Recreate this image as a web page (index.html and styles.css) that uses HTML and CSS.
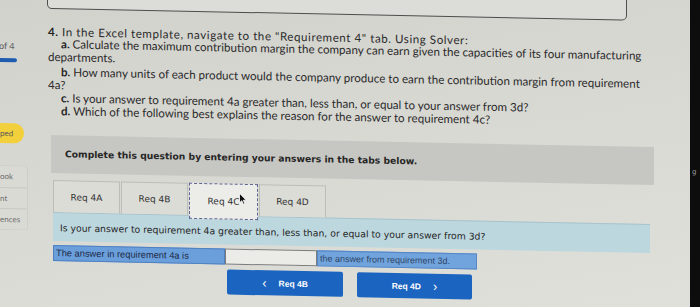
FILE: index.html
```html
<!DOCTYPE html>
<html>
<head>
<meta charset="utf-8">
<link rel="stylesheet" href="styles.css">
</head>
<body>
<div class="screen">
  <div class="page">
    <aside class="sidebar">
      <div class="count">of 4</div>
      <div class="progress"></div>
      <div class="status">ped</div>
      <ul class="tools">
        <li>ook</li>
        <li>nt</li>
        <li>ences</li>
      </ul>
    </aside>
    <main class="main">
      <div class="topbox"></div>
      <div class="question">
        <p class="q-head"><b>4.</b> In the Excel template, navigate to the "Requirement 4" tab. Using Solver:</p>
        <p class="q-item"><b>a.</b> Calculate the maximum contribution margin the company can earn given the capacities of its four manufacturing<br>departments.</p>
        <p class="q-item b"><b>b.</b> How many units of each product would the company produce to earn the contribution margin from requirement<br>4a?</p>
        <p class="q-item c"><b>c.</b> Is your answer to requirement 4a greater than, less than, or equal to your answer from 3d?</p>
        <p class="q-item"><b>d.</b> Which of the following best explains the reason for the answer to requirement 4c?</p>
      </div>
      <div class="instructions">Complete this question by entering your answers in the tabs below.</div>
      <div class="tabs">
        <div class="tab">Req 4A</div>
        <div class="tab">Req 4B</div>
        <div class="tab active">Req 4C
          <svg class="cursor" width="8" height="12" viewBox="0 0 8 12"><path d="M0.5 0.5 L0.5 10 L2.8 7.8 L4.4 11.3 L5.8 10.7 L4.3 7.3 L7.3 7.3 Z" fill="#111" stroke="#fff" stroke-width="0.8"/></svg>
        </div>
        <div class="tab">Req 4D</div>
      </div>
      <div class="prompt">Is your answer to requirement 4a greater than, less than, or equal to your answer from 3d?</div>
      <div class="answer-row">
        <div class="cell label">The answer in requirement 4a is</div>
        <div class="cell input"></div>
        <div class="cell label2">the answer from requirement 3d.</div>
      </div>
      <div class="nav">
        <div class="btn"><span class="chev">&lsaquo;</span><span>Req 4B</span></div>
        <div class="btn next"><span>Req 4D</span><span class="chev">&rsaquo;</span></div>
      </div>
    </main>
  </div>
  <div class="bezel"><span class="mark">g</span></div>
</div>
</body>
</html>
```
FILE: styles.css
```css
* { box-sizing: border-box; }
html, body { margin: 0; padding: 0; }
body {
  width: 700px;
  height: 307px;
  overflow: hidden;
  background: linear-gradient(170deg, #d2d2cd 0%, #d9d9d4 50%, #e0e0db 100%);
  font-family: Lato, "Open Sans", sans-serif;
  color: #2b2b2b;
}
.screen { display: flex; height: 307px; }
.page {
  flex: 1;
  display: flex;
  transform: skewY(1.15deg);
  transform-origin: 50px 0;
}
.sidebar { width: 30px; flex: none; }
.count {
  margin-top: 41px;
  font-size: 9px;
  line-height: 11px;
  color: #5a5a5a;
  margin-left: -1px;
}
.progress {
  margin-top: 7px;
  width: 17px;
  height: 4px;
  background: #1e5cb0;
  border-radius: 0 2px 2px 0;
}
.status {
  margin-top: 61px;
  width: 24px;
  height: 20px;
  line-height: 20px;
  background: #f2d03c;
  border-radius: 0 10px 10px 0;
  font-size: 8px;
  color: #555;
}
.tools {
  list-style: none;
  margin: 22px 0 0;
  padding: 0;
  width: 28px;
  border: 1px solid #cfcfca;
  border-left: none;
  border-radius: 0 3px 3px 0;
  background: #dadad5;
}
.tools li {
  height: 21px;
  line-height: 21px;
  font-size: 8px;
  color: #6a6a6a;
  border-top: 1px solid #c9c9c4;
}
.tools li:first-child { border-top: none; }

.main { margin-left: 17px; width: 640px; flex: none; }
.topbox {
  margin-top: -20px;
  width: 580px;
  height: 29px;
  border: 1px solid #4d4d4d;
  border-radius: 0 0 5px 5px;
  background: #dcdcd8;
}
.question { margin: 16px 0 0 1px; font-size: 11.6px; white-space: nowrap; }
.question p { margin: 0; line-height: 12.5px; }
.question .q-head { line-height: 13px; letter-spacing: 0.55px; }
.question .q-item b { margin-left: 13px; }
.question b { font-weight: 700; color: #1f1f1f; }
.question .b { margin-top: 3px; }
.question .c { margin-top: 1px; }

.instructions {
  margin: 18px 0 0 4px;
  width: 603px;
  height: 38px;
  line-height: 38px;
  padding-left: 14px;
  background: #c6c7c2;
  font-family: "DejaVu Sans", Verdana, sans-serif;
  font-weight: 700;
  font-size: 9.2px;
  color: #262626;
}
.tabs {
  margin: 7px 0 0 6px;
  display: flex;
  gap: 1px;
  height: 32px;
  position: relative;
  z-index: 1;
}
.tab {
  width: 67px;
  height: 32px;
  line-height: 32px;
  text-align: center;
  background: #dcdcd7;
  border: 1px solid #bdbdb8;
  border-bottom: none;
  font-family: "DejaVu Sans", Verdana, sans-serif;
  font-size: 9px;
  color: #333;
}
.tab.active {
  width: 69px;
  height: 36px;
  line-height: 34px;
  background: #ecece9;
  border: 1px dashed #5f6492;
  position: relative;
}
.cursor { position: absolute; left: 49px; top: 8px; }

.prompt {
  margin-left: 6px;
  width: 597px;
  height: 29px;
  line-height: 29px;
  padding-left: 7px;
  background: #bdd7df;
  border-top: 1px solid #a9c3cb;
  font-family: "DejaVu Sans", Verdana, sans-serif;
  font-size: 9.3px;
  color: #262626;
  white-space: nowrap;
}
.answer-row {
  margin: 4px 0 0 6px;
  display: flex;
  height: 16px;
}
.cell {
  height: 16px;
  line-height: 14px;
  font-family: "Liberation Sans", Arial, sans-serif;
  font-size: 9.3px;
  white-space: nowrap;
}
.label {
  width: 172px;
  background: #6b9fdb;
  border: 1px solid #4f80c2;
  padding-left: 2px;
  color: #1c2a46;
}
.input {
  width: 92px;
  background: #ebebe8;
  border: 1px solid #7c7c7c;
}
.label2 {
  width: 160px;
  background: #71a4dd;
  border: 1px solid #5687c6;
  padding-left: 2px;
  font-size: 9px;
  color: #2e4468;
}
.nav {
  margin: 5px 0 0 180px;
  display: flex;
  gap: 14px;
}
.btn {
  width: 116px;
  height: 25px;
  background: #1b64bf;
  border-radius: 2px;
  display: flex;
  align-items: center;
  justify-content: center;
  gap: 12px;
  color: #fff;
  font-family: "Liberation Sans", Arial, sans-serif;
  font-weight: 700;
  font-size: 8.5px;
}
.btn.next { width: 115px; }
.chev { font-size: 13px; font-weight: 400; line-height: 10px; }

.bezel {
  width: 10px;
  flex: none;
  background: #0d0d0e;
  position: relative;
}
.mark {
  position: absolute;
  left: 2px;
  top: 168px;
  font-family: "DejaVu Sans", sans-serif;
  font-size: 7px;
  color: #9a9a9a;
}
```
